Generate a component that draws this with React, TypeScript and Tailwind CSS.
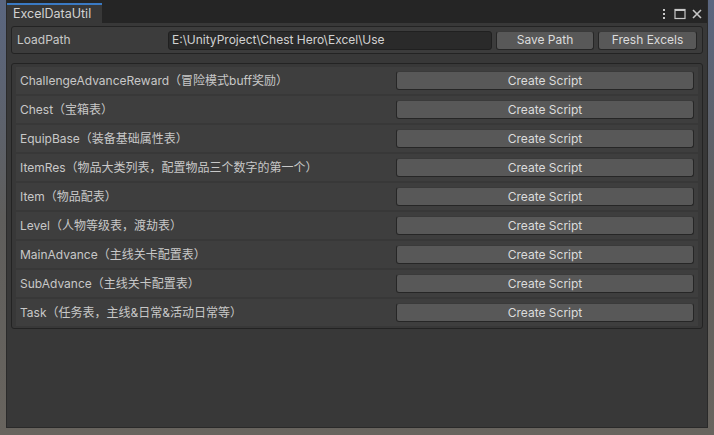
import React from "react";

const rows = [
  "ChallengeAdvanceReward（冒险模式buff奖励）",
  "Chest（宝箱表）",
  "EquipBase（装备基础属性表）",
  "ItemRes（物品大类列表，配置物品三个数字的第一个）",
  "Item（物品配表）",
  "Level（人物等级表，渡劫表）",
  "MainAdvance（主线关卡配置表）",
  "SubAdvance（主线关卡配置表）",
  "Task（任务表，主线&日常&活动日常等）",
];

const font = { fontFamily: 'Inter, "Noto Sans CJK SC", sans-serif' };

function Btn({ children, className = "" }: { children: React.ReactNode; className?: string }) {
  return (
    <div
      className={
        "flex items-center justify-center rounded-[3px] border border-[#262626] border-t-[#3a3a3a] bg-[#585858] text-[12px] text-[#dcdcdc] " +
        className
      }
    >
      {children}
    </div>
  );
}

export default function App() {
  return (
    <div
      className="flex h-[435px] w-[714px] bg-gradient-to-b from-[#5a6680] via-[#5f5e5c] to-[#68645e] pl-[7px] pr-[7px] pb-[8px]"
      style={font}
    >
      <div className="flex w-[700px] flex-col bg-[#383838] shadow-[0_0_0_1px_#2a2a2a]">
        {/* tab bar */}
        <div className="flex h-[23px] items-end justify-between bg-[#252525]">
          <div className="flex h-[20px] w-[95px] items-center border-t-2 border-[#3a7ac4] bg-[#383838] pl-[6px] text-[12.5px] text-[#d2d2d2]">
            ExcelDataUtil
          </div>
          <div className="mb-[3px] flex items-center gap-[5px] pr-[4px] text-[#c8c8c8]">
            <svg width="4" height="12" viewBox="0 0 4 12">
              <rect x="1" y="1" width="2" height="2" fill="#c8c8c8" />
              <rect x="1" y="5" width="2" height="2" fill="#c8c8c8" />
              <rect x="1" y="9" width="2" height="2" fill="#c8c8c8" />
            </svg>
            <svg width="12" height="12" viewBox="0 0 12 12" className="ml-[3px]">
              <rect x="1" y="1.5" width="10" height="9" fill="none" stroke="#c8c8c8" strokeWidth="1.2" />
              <rect x="1" y="1" width="10" height="2" fill="#c8c8c8" />
            </svg>
            <svg width="12" height="12" viewBox="0 0 12 12">
              <path d="M2 2 L10 10 M10 2 L2 10" stroke="#c8c8c8" strokeWidth="1.6" />
            </svg>
          </div>
        </div>

        <div className="flex flex-col px-[4px] pt-[3px]">
          {/* toolbar */}
          <div className="flex h-[28px] items-center rounded-[3px] border border-[#232323] bg-[#3c3c3c] pl-[5px] pr-[5px]">
            <div className="w-[151px] text-[12px] text-[#c8c8c8]">LoadPath</div>
            <div className="flex h-[19px] w-[324px] items-center rounded-[3px] border border-[#202020] bg-[#2a2a2a] pl-[3px] text-[12px] text-[#d2d2d2]">
              E:\UnityProject\Chest Hero\Excel\Use
            </div>
            <Btn className="ml-[4px] h-[19px] w-[98px]">Save Path</Btn>
            <Btn className="ml-[4px] h-[19px] w-[99px]">Fresh Excels</Btn>
          </div>

          {/* list */}
          <div className="mt-[9px] flex flex-col gap-[2px] rounded-[3px] border border-[#232323] bg-[#383838] px-[4px] pt-[3px] pb-[2px]">
            {rows.map((r) => (
              <div key={r} className="flex h-[27px] items-center justify-between bg-[#3e3e3e] pl-[4px] pr-[4px]">
                <div className="text-[12px] text-[#c8c8c8]">{r}</div>
                <Btn className="h-[19px] w-[298px]">Create Script</Btn>
              </div>
            ))}
          </div>
        </div>
      </div>
    </div>
  );
}
